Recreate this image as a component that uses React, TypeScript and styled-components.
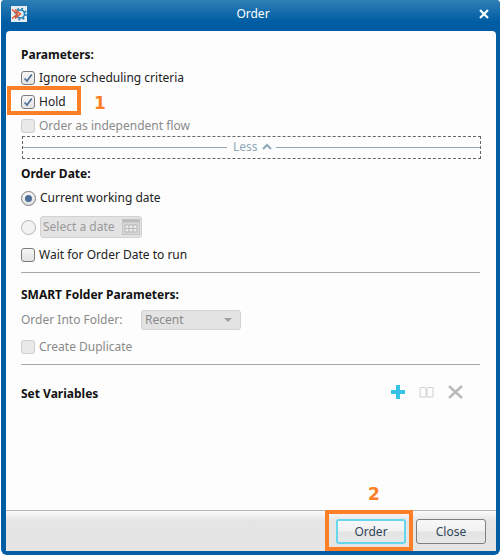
import React from 'react'
import styled, { createGlobalStyle } from 'styled-components'

const Global = createGlobalStyle`
  html, body { margin: 0; padding: 0; background: #fff; }
  body { font-family: "Noto Sans", "DejaVu Sans", sans-serif; }
`

const Window = styled.div`
  position: relative;
  width: 499px;
  height: 555px;
  margin-left: 1px;
  box-sizing: border-box;
  background: #005da4;
  border-radius: 4px 4px 6px 6px;
  padding: 0 4px 4px 5px;
  display: flex;
  flex-direction: column;
  overflow: hidden;
`

const TitleBar = styled.div`
  flex: 0 0 31px;
  margin: 0 -4px 0 -5px;
  padding: 0 11px 4px 10px;
  box-sizing: border-box;
  display: flex;
  align-items: center;
  justify-content: space-between;
  background: linear-gradient(180deg, #2f7fb5 0%, #005da4 70%);
`

const TitleText = styled.span`
  color: #fff;
  font-size: 12px;
`

const AppIcon = styled.svg`
  width: 16px;
  height: 16px;
  background: #e6edf2;
`

const CloseIcon = styled.svg`
  width: 10px;
  height: 10px;
`

const Body = styled.div`
  flex: 1;
  background: #fdfdfd;
  border-radius: 4px 4px 0 0;
  padding: 16px 16px 0 15px;
  display: flex;
  flex-direction: column;
  min-height: 0;
`

const Heading = styled.div<{ $top?: number }>`
  font-size: 12px;
  font-weight: 700;
  line-height: 16px;
  color: #111;
  margin-top: ${(p) => p.$top ?? 0}px;
`

const Row = styled.div<{ $top?: number; $disabled?: boolean }>`
  display: flex;
  align-items: center;
  gap: 4px;
  height: 16px;
  margin-top: ${(p) => p.$top ?? 0}px;
  font-size: 12px;
  color: ${(p) => (p.$disabled ? '#8a8a8a' : '#222')};
`

const Label = styled.span`
  padding-bottom: 2px;
`

const CheckBox = styled.span<{ $disabled?: boolean }>`
  box-sizing: border-box;
  width: 14px;
  height: 14px;
  border-radius: 3px;
  border: 1px solid ${(p) => (p.$disabled ? '#cfcfcf' : '#7c7c7c')};
  background: ${(p) => (p.$disabled ? '#e9e9e9' : 'linear-gradient(180deg, #f6f6f6, #e2e2e2)')};
  display: flex;
  align-items: center;
  justify-content: center;
  flex: none;
`

const Radio = styled.span<{ $disabled?: boolean }>`
  box-sizing: border-box;
  width: 15px;
  height: 15px;
  border-radius: 50%;
  border: 1px solid ${(p) => (p.$disabled ? '#b5b5b5' : '#7c7c7c')};
  background: ${(p) => (p.$disabled ? '#f2f2f2' : 'linear-gradient(180deg, #f6f6f6, #e2e2e2)')};
  display: flex;
  align-items: center;
  justify-content: center;
  flex: none;
  &::after {
    content: '';
    display: ${(p) => (p.$disabled ? 'none' : 'block')};
    width: 7px;
    height: 7px;
    border-radius: 50%;
    background: #4d6f96;
  }
`

const LessBar = styled.div`
  box-sizing: border-box;
  height: 23px;
  width: 459px;
  margin: 2px 0 0 1px;
  border: 1px dashed #666;
  display: flex;
  align-items: center;
  font-size: 12px;
  color: #8fa8b8;
  &::before,
  &::after {
    content: '';
    height: 1px;
    background: #8fa8b8;
  }
  &::before { width: 204px; }
  &::after { flex: 1; }
`

const LessLabel = styled.span`
  display: flex;
  align-items: center;
  gap: 4px;
  padding: 0 4px 2px 6px;
`

const DateField = styled.div`
  box-sizing: border-box;
  width: 102px;
  height: 22px;
  background: #e3e3e3;
  border: 1px solid #d2d2d2;
  border-radius: 3px;
  display: flex;
  align-items: center;
  justify-content: space-between;
  padding: 0 0 0 2px;
  font-size: 12px;
  color: #9a9a9a;
`

const CalendarIcon = styled.svg`
  width: 18px;
  height: 18px;
  flex: none;
  margin-right: 1px;
`

const Divider = styled.div<{ $top: number }>`
  height: 1px;
  background: #a8a8a8;
  margin-top: ${(p) => p.$top}px;
`

const FolderLabel = styled(Label)`
  width: 116px;
`

const Select = styled.div`
  box-sizing: border-box;
  width: 100px;
  height: 20px;
  background: #e3e3e3;
  border: 1px solid #d2d2d2;
  border-radius: 3px;
  display: flex;
  align-items: center;
  justify-content: space-between;
  padding: 0 8px 0 3px;
  color: #8a8a8a;
  &::after {
    content: '';
    border-left: 4px solid transparent;
    border-right: 4px solid transparent;
    border-top: 4px solid #a0a0a0;
  }
`

const VariablesRow = styled.div`
  display: flex;
  align-items: center;
  justify-content: space-between;
  margin-top: 20px;
  height: 18px;
  padding-right: 17px;
`

const VariableTools = styled.div`
  display: flex;
  align-items: center;
  gap: 14px;
  margin-top: -5px;
`

const Footer = styled.div`
  flex: 0 0 41px;
  box-sizing: border-box;
  border-top: 1px solid #b5b5b5;
  background: linear-gradient(180deg, #fafafa 0, #e5e5e5 10px);
  display: flex;
  align-items: center;
  justify-content: flex-end;
  gap: 10px;
  padding: 0 10px 0 0;
`

const Button = styled.button<{ $focused?: boolean }>`
  width: 70px;
  height: 25px;
  box-sizing: border-box;
  border-radius: 3px;
  border: ${(p) => (p.$focused ? '2px solid #66d5ee' : '1px solid #7f7f7f')};
  background: linear-gradient(180deg, #f8f8f8 0%, #f1f1f1 48%, #e3e3e3 52%, #e8e8e8 100%);
  font-family: inherit;
  font-size: 12px;
  color: #33475a;
  padding: 0;
`

const Callout = styled.div<{ $x: number; $y: number; $w: number; $h: number }>`
  position: absolute;
  box-sizing: border-box;
  left: ${(p) => p.$x}px;
  top: ${(p) => p.$y}px;
  width: ${(p) => p.$w}px;
  height: ${(p) => p.$h}px;
  border: 4px solid #ff7f27;
`

const CalloutNumber = styled.span<{ $x: number; $y: number }>`
  position: absolute;
  left: ${(p) => p.$x}px;
  top: ${(p) => p.$y}px;
  font: 700 17px/18px "DejaVu Sans", sans-serif;
  color: #ff7f27;
`

const Tick = () => (
  <svg width="10" height="10" viewBox="0 0 10 10">
    <path d="M1.5 5.5 L4 8 L8.8 1.5" fill="none" stroke="#4d6f96" strokeWidth="1.7" />
  </svg>
)

export default function App() {
  return (
    <>
      <Global />
      <Window>
        <TitleBar>
          <AppIcon viewBox="0 0 16 16">
            <circle cx="9.5" cy="8" r="4" fill="none" stroke="#1f7fb8" strokeWidth="1.6" />
            <circle cx="9.5" cy="8" r="5.6" fill="none" stroke="#1f7fb8" strokeWidth="1.6" strokeDasharray="2 2.4" />
            <path d="M1 3.5 L6.5 8 L1 12.5 M4 3.5 L9.5 8 L4 12.5" fill="none" stroke="#e8562a" strokeWidth="1.4" />
          </AppIcon>
          <TitleText>Order</TitleText>
          <CloseIcon viewBox="0 0 10 10">
            <path d="M1 1 L9 9 M9 1 L1 9" stroke="#fff" strokeWidth="2.2" />
          </CloseIcon>
        </TitleBar>
        <Body>
          <Heading>Parameters:</Heading>
          <Row $top={7}>
            <CheckBox><Tick /></CheckBox>
            <Label>Ignore scheduling criteria</Label>
          </Row>
          <Row $top={8}>
            <CheckBox><Tick /></CheckBox>
            <Label>Hold</Label>
          </Row>
          <Row $top={8} $disabled>
            <CheckBox $disabled />
            <Label>Order as independent flow</Label>
          </Row>
          <LessBar>
            <LessLabel>
              Less
              <svg width="10" height="7" viewBox="0 0 10 7">
                <path d="M1 6 L5 2 L9 6" fill="none" stroke="#8fa8b8" strokeWidth="2" />
              </svg>
            </LessLabel>
          </LessBar>
          <Heading $top={7}>Order Date:</Heading>
          <Row $top={8}>
            <Radio />
            <Label>Current working date</Label>
          </Row>
          <Row $top={13} $disabled>
            <Radio $disabled />
            <DateField>
              <Label>Select a date</Label>
              <CalendarIcon viewBox="0 0 18 18">
                <rect x="0.5" y="1.5" width="17" height="15" fill="#d8d8d8" stroke="#c4c4c4" />
                <rect x="0.5" y="1.5" width="17" height="3" fill="#bdbdbd" />
                <path d="M3 7 H15 V14 H3 Z M3 10.5 H15 M7 7 V14 M11 7 V14" fill="#eee" stroke="#b5b5b5" />
              </CalendarIcon>
            </DateField>
          </Row>
          <Row $top={12}>
            <CheckBox />
            <Label>Wait for Order Date to run</Label>
          </Row>
          <Divider $top={9} />
          <Heading $top={14}>SMART Folder Parameters:</Heading>
          <Row $top={9} $disabled>
            <FolderLabel>Order Into Folder:</FolderLabel>
            <Select><Label>Recent</Label></Select>
          </Row>
          <Row $top={11} $disabled>
            <CheckBox $disabled />
            <Label>Create Duplicate</Label>
          </Row>
          <Divider $top={9} />
          <VariablesRow>
            <Heading>Set Variables</Heading>
            <VariableTools>
              <svg width="14" height="14" viewBox="0 0 14 14">
                <path d="M7 0 V14 M0 7 H14" stroke="#35c2e6" strokeWidth="4" />
              </svg>
              <svg width="15" height="12" viewBox="0 0 15 12">
                <path d="M1 1.5 H6 L7 3 V11 H1 Z M8 3 L9 1.5 H14 V11 H8 Z" fill="none" stroke="#d0d0d0" />
              </svg>
              <svg width="15" height="14" viewBox="0 0 15 14">
                <path d="M1 1 L14 13 M14 1 L1 13" stroke="#b9b9b9" strokeWidth="2.4" />
              </svg>
            </VariableTools>
          </VariablesRow>
        </Body>
        <Footer>
          <Button $focused>Order</Button>
          <Button>Close</Button>
        </Footer>
        <Callout $x={6} $y={86} $w={74} $h={29} />
        <CalloutNumber $x={93} $y={94}>1</CalloutNumber>
        <Callout $x={324} $y={510} $w={88} $h={41} />
        <CalloutNumber $x={367} $y={485}>2</CalloutNumber>
      </Window>
    </>
  )
}
